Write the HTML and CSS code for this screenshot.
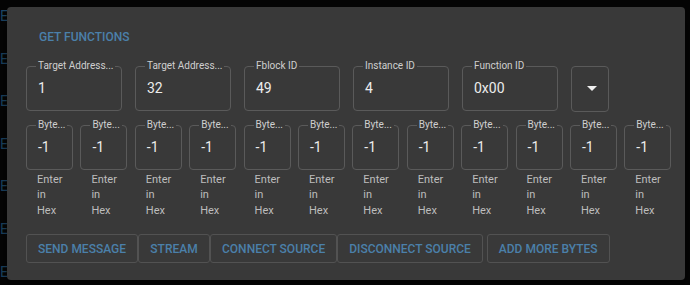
FILE: index.html
```html
<!DOCTYPE html>
<html>
<head>
<meta charset="utf-8">
<link rel="stylesheet" href="styles.css">
</head>
<body>
<div class="behind">
  <div class="behind-top"><span class="bt-a">57</span><span class="bt-b">0100</span></div>
  <div class="behind-col">
    <div class="behind-row">E</div>
    <div class="behind-row">E</div>
    <div class="behind-row">E</div>
    <div class="behind-row">E</div>
    <div class="behind-row">E</div>
    <div class="behind-row">E</div>
    <div class="behind-row">E</div>
  </div>
</div>
<div class="dialog">
  <div class="title">GET FUNCTIONS</div>
  <div class="row-main">
    <fieldset class="field"><legend>Target Address...</legend><div class="value">1</div></fieldset>
    <fieldset class="field"><legend>Target Address...</legend><div class="value">32</div></fieldset>
    <fieldset class="field"><legend>Fblock ID</legend><div class="value">49</div></fieldset>
    <fieldset class="field"><legend>Instance ID</legend><div class="value">4</div></fieldset>
    <fieldset class="field"><legend>Function ID</legend><div class="value">0x00</div></fieldset>
    <div class="select"><svg width="10" height="5" viewBox="0 0 10 5"><path d="M0 0 L10 0 L5 5 Z" fill="#f0f0f0"/></svg></div>
  </div>
  <div class="row-bytes">
    <div class="byte"><fieldset class="field"><legend>Byte...</legend><div class="value">-1</div></fieldset><div class="helper"><span>Enter</span><span>in</span><span>Hex</span></div></div>
    <div class="byte"><fieldset class="field"><legend>Byte...</legend><div class="value">-1</div></fieldset><div class="helper"><span>Enter</span><span>in</span><span>Hex</span></div></div>
    <div class="byte"><fieldset class="field"><legend>Byte...</legend><div class="value">-1</div></fieldset><div class="helper"><span>Enter</span><span>in</span><span>Hex</span></div></div>
    <div class="byte"><fieldset class="field"><legend>Byte...</legend><div class="value">-1</div></fieldset><div class="helper"><span>Enter</span><span>in</span><span>Hex</span></div></div>
    <div class="byte"><fieldset class="field"><legend>Byte...</legend><div class="value">-1</div></fieldset><div class="helper"><span>Enter</span><span>in</span><span>Hex</span></div></div>
    <div class="byte"><fieldset class="field"><legend>Byte...</legend><div class="value">-1</div></fieldset><div class="helper"><span>Enter</span><span>in</span><span>Hex</span></div></div>
    <div class="byte"><fieldset class="field"><legend>Byte...</legend><div class="value">-1</div></fieldset><div class="helper"><span>Enter</span><span>in</span><span>Hex</span></div></div>
    <div class="byte"><fieldset class="field"><legend>Byte...</legend><div class="value">-1</div></fieldset><div class="helper"><span>Enter</span><span>in</span><span>Hex</span></div></div>
    <div class="byte"><fieldset class="field"><legend>Byte...</legend><div class="value">-1</div></fieldset><div class="helper"><span>Enter</span><span>in</span><span>Hex</span></div></div>
    <div class="byte"><fieldset class="field"><legend>Byte...</legend><div class="value">-1</div></fieldset><div class="helper"><span>Enter</span><span>in</span><span>Hex</span></div></div>
    <div class="byte"><fieldset class="field"><legend>Byte...</legend><div class="value">-1</div></fieldset><div class="helper"><span>Enter</span><span>in</span><span>Hex</span></div></div>
    <div class="byte"><fieldset class="field"><legend>Byte...</legend><div class="value">-1</div></fieldset><div class="helper"><span>Enter</span><span>in</span><span>Hex</span></div></div>
  </div>
  <div class="actions">
    <button class="btn">SEND MESSAGE</button>
    <button class="btn btn-min">STREAM</button>
    <button class="btn">CONNECT SOURCE</button>
    <button class="btn">DISCONNECT SOURCE</button>
    <button class="btn btn-last">ADD MORE BYTES</button>
  </div>
</div>
</body>
</html>
```
FILE: styles.css
```css
html, body {
  margin: 0;
  padding: 0;
}
body {
  width: 690px;
  height: 285px;
  overflow: hidden;
  background: #050505;
  font-family: Roboto, "Liberation Sans", sans-serif;
  position: relative;
}
.behind {
  display: flex;
  flex-direction: column;
  height: 285px;
  overflow: hidden;
}
.behind-top {
  height: 6px;
  overflow: hidden;
  display: flex;
  font-size: 14px;
  line-height: 14px;
  color: #2b3f52;
}
.behind-top span {
  display: block;
  margin-top: -9px;
}
.bt-a { margin-left: 80px; }
.bt-b { margin-left: 250px; }
.behind-col {
  display: flex;
  flex-direction: column;
  margin-top: 8px;
}
.behind-row {
  flex: none;
  height: 42.6px;
  font-size: 14px;
  line-height: 16px;
  color: #1e4a6c;
}
.dialog {
  position: absolute;
  left: 7px;
  top: 7px;
  width: 678px;
  height: 273px;
  box-sizing: border-box;
  background: #393939;
  border-radius: 4px;
  box-shadow: 0 8px 20px rgba(0,0,0,0.6);
  padding: 22px 0 0 19px;
  display: flex;
  flex-direction: column;
}
.title {
  margin-left: 13px;
  font-size: 12px;
  line-height: 16px;
  font-weight: 500;
  color: #4b80aa;
}
.row-main {
  margin-top: 15px;
  display: flex;
  gap: 13px;
  align-items: flex-start;
}
.field {
  margin: 0;
  padding: 0 10px;
  border: 1px solid #5a5a5a;
  border-radius: 4px;
  min-width: 0;
  box-sizing: border-box;
  width: 96px;
}
.field legend {
  font-size: 10px;
  line-height: 12px;
  color: #cfcfcf;
  padding: 0 2px;
  margin-left: -1px;
  white-space: nowrap;
}
.value {
  font-size: 14px;
  line-height: 17px;
  color: #ececec;
  padding: 8px 0 13px 1px;
}
.select {
  margin-top: 6px;
  width: 38px;
  height: 46px;
  box-sizing: border-box;
  border: 1px solid #5a5a5a;
  border-radius: 4px;
  display: flex;
  align-items: center;
  justify-content: center;
}
.select svg {
  margin-left: 3px;
  margin-top: -2px;
}
.row-bytes {
  margin-top: 7px;
  display: flex;
  gap: 7.4px;
}
.byte {
  width: 47px;
  display: flex;
  flex-direction: column;
}
.byte .field {
  width: 47px;
}
.helper {
  margin-top: 1.5px;
  padding-left: 11px;
  display: flex;
  flex-direction: column;
  font-size: 11px;
  line-height: 15.5px;
  color: #bdbdbd;
}
.actions {
  margin-top: 16px;
  display: flex;
  gap: 0;
}
.btn {
  height: 29px;
  box-sizing: border-box;
  background: transparent;
  border: 1px solid #525252;
  border-radius: 3px;
  padding: 0 11px;
  font-family: Roboto, "Liberation Sans", sans-serif;
  font-size: 12px;
  font-weight: 500;
  letter-spacing: 0;
  color: #4b80aa;
  white-space: nowrap;
}
.btn-min {
  min-width: 72px;
}
.btn-last {
  margin-left: 4px;
}
```
